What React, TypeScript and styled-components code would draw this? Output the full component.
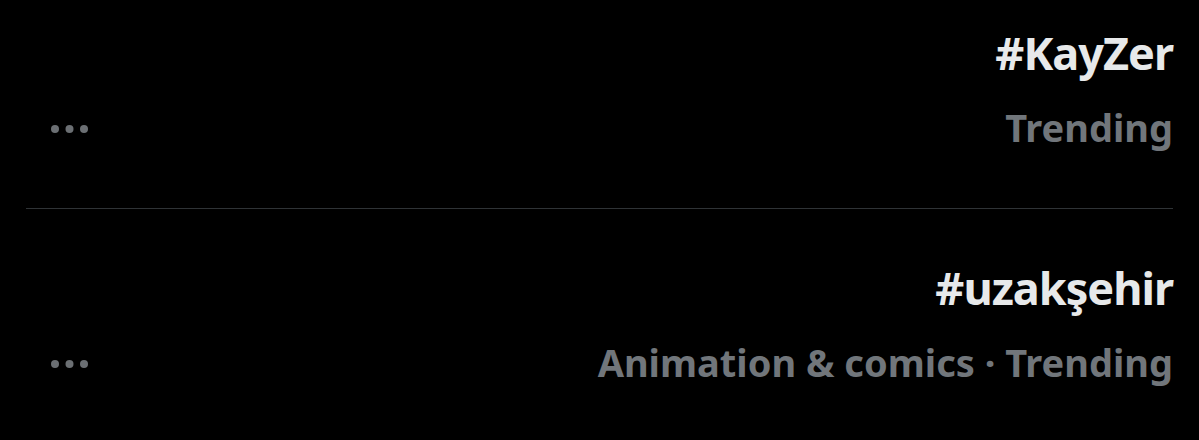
import React from "react";
import styled, { createGlobalStyle } from "styled-components";

const Global = createGlobalStyle`
  html, body { margin: 0; padding: 0; background: #000; }
  body { font-family: "Noto Sans", "Open Sans", sans-serif; }
`;

const Page = styled.div`
  width: 1199px;
  height: 440px;
  box-sizing: border-box;
  padding: 0 26px;
  background: #000;
  overflow: hidden;
`;

const Row = styled.div`
  display: flex;
  flex-direction: column;
  padding-top: 25px;
`;

const Title = styled.div`
  font-size: 45px;
  line-height: 56px;
  font-weight: 700;
  letter-spacing: -1px;
  color: #e7e9ea;
  text-align: right;
  margin-bottom: 22px;
`;

const Meta = styled.div`
  display: flex;
  align-items: center;
  justify-content: space-between;
  height: 48px;
`;

const Sub = styled.div`
  font-size: 38px;
  line-height: 48px;
  font-weight: 700;
  color: #71767b;
  white-space: nowrap;
`;

const Dots = styled.svg`
  margin-left: 24px;
  margin-top: 4px;
  flex: none;
`;

const Divider = styled.div`
  height: 1px;
  background: #2f3336;
  margin: 57px 0 26px;
`;

const More = () => (
  <Dots width="40" height="10" viewBox="0 0 40 10">
    <circle cx="5" cy="5" r="4" fill="#6b6f73" />
    <circle cx="19.5" cy="5" r="4" fill="#6b6f73" />
    <circle cx="34" cy="5" r="4" fill="#6b6f73" />
  </Dots>
);

const trends = [
  { tag: "#KayZer", meta: "Trending" },
  { tag: "#uzakşehir", meta: "Animation & comics · Trending" },
];

export default function App() {
  return (
    <>
      <Global />
      <Page>
        {trends.map((t, i) => (
          <React.Fragment key={t.tag}>
            {i > 0 && <Divider />}
            <Row>
              <Title>{t.tag}</Title>
              <Meta>
                <More />
                <Sub>{t.meta}</Sub>
              </Meta>
            </Row>
          </React.Fragment>
        ))}
      </Page>
    </>
  );
}
